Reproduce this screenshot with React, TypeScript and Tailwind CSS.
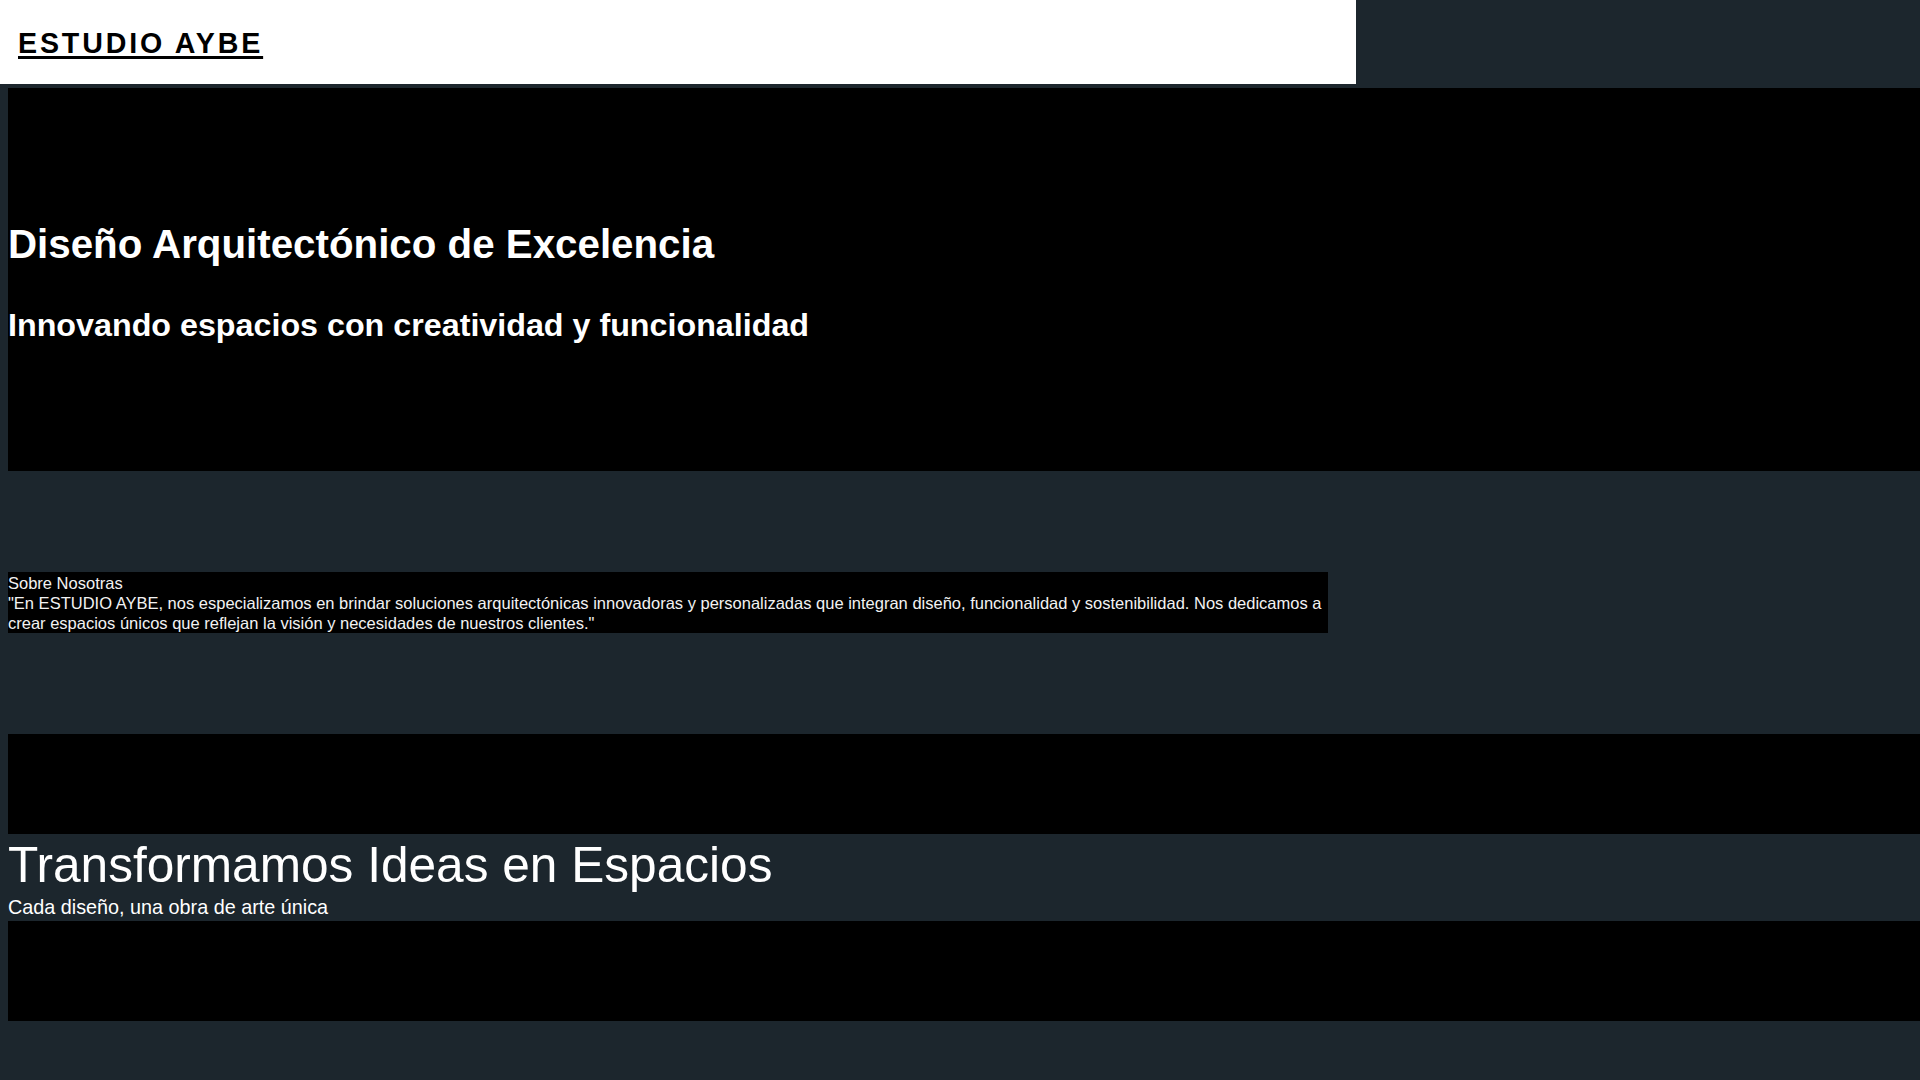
export default function App() {
  return (
    <div className="h-screen w-full overflow-scroll bg-[#1c262d] font-['Liberation_Sans',Arial,sans-serif]">
      <div className="min-h-[1091px]">
        {/* Header */}
        <header className="w-[1356px] h-[84px] bg-white pl-[18px] pt-[27px]">
          <a
            href="#"
            className="text-[28.6px] leading-[32px] font-bold tracking-[0.1em] text-black underline decoration-[3px] underline-offset-[3px]"
          >
            ESTUDIO AYBE
          </a>
        </header>

        {/* Hero */}
        <section className="mt-[4px] ml-2 w-full h-[383px] bg-black text-white pt-[134px]">
          <h1 className="text-[40.3px] leading-[46px] font-bold">Diseño Arquitectónico de Excelencia</h1>
          <h2 className="mt-[39px] text-[32.25px] leading-[37px] font-bold">
            Innovando espacios con creatividad y funcionalidad
          </h2>
        </section>

        {/* Sobre Nosotras */}
        <section className="mt-[101px] ml-2 w-[1320px] bg-black text-[#f2f2f2] text-[16.5px] leading-[20px] pt-px">
          <h3>Sobre Nosotras</h3>
          <p>
            "En ESTUDIO AYBE, nos especializamos en brindar soluciones arquitectónicas innovadoras y personalizadas que
            integran diseño, funcionalidad y sostenibilidad. Nos dedicamos a crear espacios únicos que reflejan la visión
            y necesidades de nuestros clientes."
          </p>
        </section>

        {/* Banner */}
        <div className="mt-[101px] ml-2 w-full h-[100px] bg-black" />
        <section className="ml-2 w-[1320px] h-[87px] text-white pt-[2px]">
          <h2 className="text-[49.6px] leading-[58px]">Transformamos Ideas en Espacios</h2>
          <p className="mt-[2px] text-[19.8px] leading-[23px]">Cada diseño, una obra de arte única</p>
        </section>
        <div className="ml-2 w-full h-[100px] bg-black" />
      </div>
    </div>
  )
}
